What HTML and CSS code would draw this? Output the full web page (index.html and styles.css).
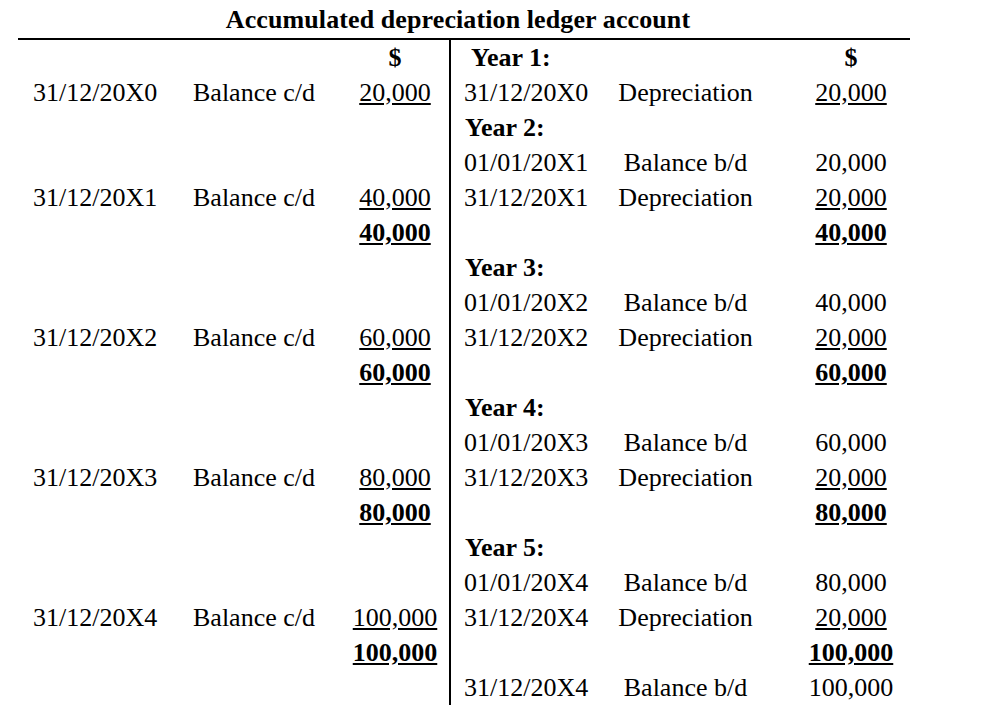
FILE: index.html
```html
<!DOCTYPE html>
<html lang="en">

<head>
    <meta charset="UTF-8">
    <meta name="viewport" content="width=device-width, initial-scale=1.0">
    <title>Accumulated depreciation ledger account</title>
    <link rel="stylesheet" href="styles.css">
</head>

<body>
    <div class="account">
        <h1 class="title">Accumulated depreciation ledger account</h1>
        <div class="ledger">
            <div class="side debit">
                <div class="row"><span></span><span></span><span class="amt bold">$</span></div>
                <div class="row"><span>31/12/20X0</span><span>Balance c/d</span><span class="amt u">20,000</span></div>
                <div class="row"></div>
                <div class="row"></div>
                <div class="row"><span>31/12/20X1</span><span>Balance c/d</span><span class="amt u">40,000</span></div>
                <div class="row"><span></span><span></span><span class="amt bold u">40,000</span></div>
                <div class="row"></div>
                <div class="row"></div>
                <div class="row"><span>31/12/20X2</span><span>Balance c/d</span><span class="amt u">60,000</span></div>
                <div class="row"><span></span><span></span><span class="amt bold u">60,000</span></div>
                <div class="row"></div>
                <div class="row"></div>
                <div class="row"><span>31/12/20X3</span><span>Balance c/d</span><span class="amt u">80,000</span></div>
                <div class="row"><span></span><span></span><span class="amt bold u">80,000</span></div>
                <div class="row"></div>
                <div class="row"></div>
                <div class="row"><span>31/12/20X4</span><span>Balance c/d</span><span class="amt u">100,000</span></div>
                <div class="row"><span></span><span></span><span class="amt bold u">100,000</span></div>
                <div class="row"></div>
            </div>
            <div class="side credit">
                <div class="row"><span class="year first">Year 1:</span><span class="amt bold">$</span></div>
                <div class="row"><span>31/12/20X0</span><span class="desc">Depreciation</span><span class="amt u">20,000</span></div>
                <div class="row"><span class="year">Year 2:</span></div>
                <div class="row"><span>01/01/20X1</span><span class="desc">Balance b/d</span><span class="amt">20,000</span></div>
                <div class="row"><span>31/12/20X1</span><span class="desc">Depreciation</span><span class="amt u">20,000</span></div>
                <div class="row"><span></span><span></span><span class="amt bold u">40,000</span></div>
                <div class="row"><span class="year">Year 3:</span></div>
                <div class="row"><span>01/01/20X2</span><span class="desc">Balance b/d</span><span class="amt">40,000</span></div>
                <div class="row"><span>31/12/20X2</span><span class="desc">Depreciation</span><span class="amt u">20,000</span></div>
                <div class="row"><span></span><span></span><span class="amt bold u">60,000</span></div>
                <div class="row"><span class="year">Year 4:</span></div>
                <div class="row"><span>01/01/20X3</span><span class="desc">Balance b/d</span><span class="amt">60,000</span></div>
                <div class="row"><span>31/12/20X3</span><span class="desc">Depreciation</span><span class="amt u">20,000</span></div>
                <div class="row"><span></span><span></span><span class="amt bold u">80,000</span></div>
                <div class="row"><span class="year">Year 5:</span></div>
                <div class="row"><span>01/01/20X4</span><span class="desc">Balance b/d</span><span class="amt">80,000</span></div>
                <div class="row"><span>31/12/20X4</span><span class="desc">Depreciation</span><span class="amt u">20,000</span></div>
                <div class="row"><span></span><span></span><span class="amt bold u">100,000</span></div>
                <div class="row"><span>31/12/20X4</span><span class="desc">Balance b/d</span><span class="amt">100,000</span></div>
            </div>
        </div>
    </div>
</body>

</html>
```

FILE: styles.css
```css
* {
    margin: 0;
    padding: 0;
    box-sizing: border-box;
}

body {
    font-family: "Liberation Serif", "Times New Roman", serif;
    font-size: 26px;
    color: #000;
    background-color: #fff;
}

.account {
    width: 892px;
    margin-left: 18px;
    padding-top: 5px;
}

.title {
    font-size: 26px;
    font-weight: bold;
    line-height: 30px;
    text-align: center;
    margin-bottom: 3px;
    padding-right: 12px;
    letter-spacing: 0.1px;
}

.ledger {
    display: flex;
    border-top: 2px solid #000;
}

.side {
    display: flex;
    flex-direction: column;
}

.debit {
    width: 433px;
    padding-left: 15px;
    border-right: 2px solid #000;
}

.credit {
    flex: 1;
    padding-left: 13px;
}

.row {
    display: grid;
    height: 35px;
    line-height: 35px;
    white-space: nowrap;
}

.debit .row {
    grid-template-columns: 160px 146px 112px;
}

.credit .row {
    grid-template-columns: 134px 175px 1fr;
}

.credit .year {
    grid-column: 1 / 3;
    font-weight: bold;
    padding-left: 1px;
}

.credit .year.first {
    padding-left: 7px;
}

.credit .year + .amt {
    grid-column: 3;
}

.desc {
    text-align: center;
}

.amt {
    text-align: center;
}

.credit .amt {
    padding-left: 19px;
}

.bold {
    font-weight: bold;
}

.u {
    text-decoration: underline;
}
```
